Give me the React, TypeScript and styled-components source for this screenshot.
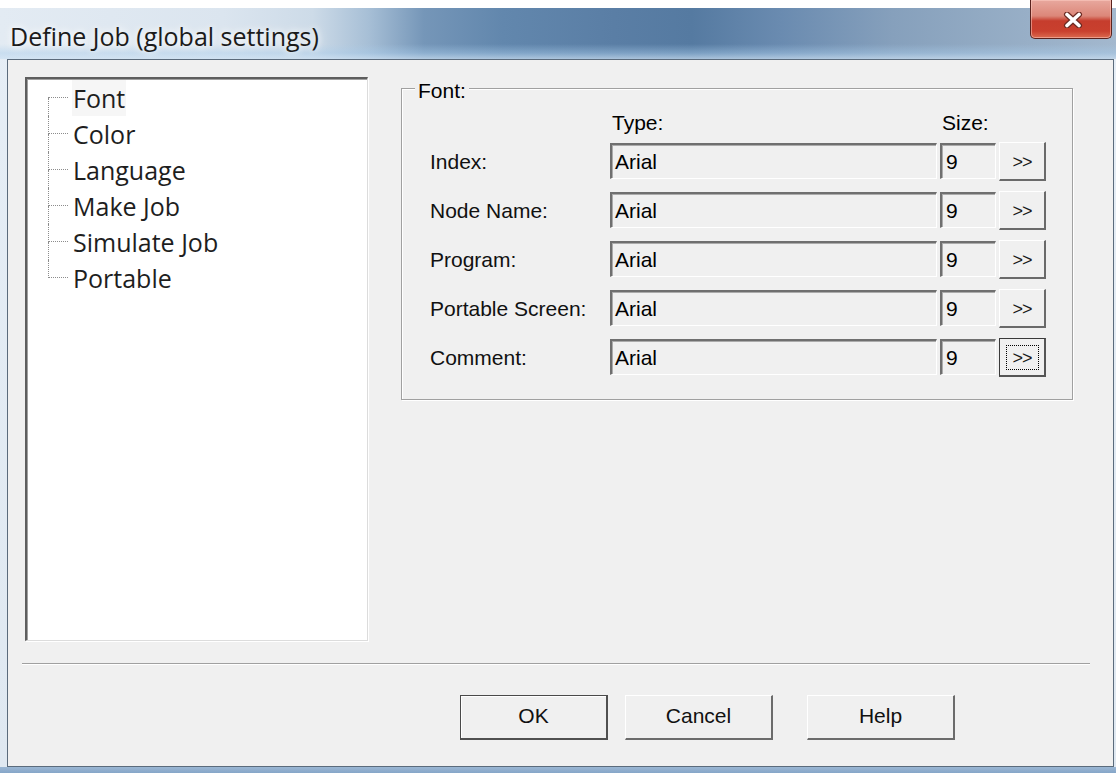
import { Fragment } from 'react';
import styled, { createGlobalStyle } from 'styled-components';

const GlobalStyle = createGlobalStyle`
  html, body {
    margin: 0;
    padding: 0;
    background: #ffffff;
  }
  body {
    width: 1116px;
    height: 773px;
    overflow: hidden;
  }
`;

const Window = styled.div`
  width: 1116px;
  height: 773px;
  display: flex;
  flex-direction: column;
  background: linear-gradient(
    to bottom,
    #e6eef6 0,
    #dfe8f1 calc(100% - 6px),
    #9ab6d3 calc(100% - 6px),
    #86a6c8 100%
  );
`;

const TitleBar = styled.div`
  height: 59px;
  flex: none;
  display: flex;
  align-items: flex-start;
  justify-content: space-between;
  background:
    linear-gradient(
      to bottom,
      #ffffff 0,
      #ffffff 8px,
      rgba(255, 255, 255, 0) 8px,
      rgba(255, 255, 255, 0) 44px,
      rgba(170, 205, 235, 0.45) 53px,
      rgba(205, 225, 243, 0.7) 59px
    ),
    linear-gradient(
      to right,
      #e3ebf3 0%,
      #dbe5ef 20%,
      #cddbe8 28%,
      #a7bfd6 33%,
      #7596b8 38%,
      #6287ad 45%,
      #5a7ea5 55%,
      #557aa1 62%,
      #6a8bb0 70%,
      #86a0bc 80%,
      #92aac3 88%,
      #a3b8ce 100%
    );
`;

const Title = styled.span`
  margin: 19px 0 0 10px;
  font-family: 'Open Sans', 'Noto Sans', sans-serif;
  font-size: 25px;
  line-height: 34px;
  color: #1b1b1b;
  text-shadow: 0 0 6px rgba(255, 255, 255, 0.95), 0 0 12px rgba(255, 255, 255, 0.8);
`;

const CloseButton = styled.div`
  width: 82px;
  height: 39px;
  margin-right: 4px;
  box-sizing: border-box;
  display: flex;
  align-items: center;
  justify-content: center;
  padding: 2px 0 0 4px;
  border: 1px solid #5a221d;
  border-top: none;
  border-radius: 0 0 5px 5px;
  background: linear-gradient(
    to bottom,
    #e8a89e 0%,
    #dc8779 42%,
    #c63d2d 55%,
    #c9402e 82%,
    #db6a4f 100%
  );
  box-shadow: inset 0 0 0 1px rgba(255, 210, 200, 0.5);
`;

const Client = styled.div`
  flex: 1;
  margin: 0 2px 6px 7px;
  border: 1px solid #5b6b7c;
  background: #f0f0f0;
  display: flex;
  flex-direction: column;
  font-family: 'Liberation Sans', Arial, sans-serif;
  font-size: 21px;
  color: #000;
`;

const Body = styled.div`
  display: flex;
  align-items: flex-start;
  gap: 33px;
  padding: 17px 0 0 17px;
`;

const Tree = styled.div`
  width: 343px;
  height: 564px;
  box-sizing: border-box;
  padding-top: 1px;
  background: #ffffff;
  border-style: solid;
  border-width: 2px 1px 1px 2px;
  border-color: #5e5e5e #dcdcdc #dcdcdc #5e5e5e;
  box-shadow: inset 1px 1px 0 #a0a0a0, 1px 1px 0 #ffffff;
`;

const TreeRow = styled.div`
  display: flex;
  height: 36px;
`;

const Branch = styled.div<{ $first?: boolean; $last?: boolean }>`
  width: 20px;
  margin-left: 21px;
  display: flex;
  flex-direction: column;

  &::before {
    content: '';
    height: 18px;
    box-sizing: border-box;
    border-left: ${(p) => (p.$first ? 'none' : '1px dotted #8c8c8c')};
    border-bottom: 1px dotted #8c8c8c;
  }

  &::after {
    content: '';
    height: 18px;
    border-left: ${(p) => (p.$last ? 'none' : '1px dotted #8c8c8c')};
  }
`;

const TreeLabel = styled.span<{ $current?: boolean }>`
  margin-left: 4px;
  padding: 0 1px;
  font-family: 'Open Sans', 'Noto Sans', sans-serif;
  font-size: 25px;
  line-height: 36px;
  color: #1e1e1e;
  background: ${(p) => (p.$current ? 'rgba(0, 0, 0, 0.035)' : 'transparent')};
`;

const GroupBox = styled.div`
  margin-top: 11px;
  width: 672px;
  box-sizing: border-box;
  border: 1px solid #a0a0a0;
  box-shadow: inset 1px 1px 0 #ffffff, 1px 1px 0 #ffffff;
  padding: 22px 26px 24px 28px;
`;

const Legend = styled.div`
  width: fit-content;
  margin: -32px 0 8px -15px;
  padding: 0 3px;
  line-height: 24px;
  background: #f0f0f0;
`;

const FontGrid = styled.div`
  display: grid;
  grid-template-columns: 177px 327px 56px 47px;
  grid-template-rows: 19px repeat(5, 36px);
  column-gap: 3px;
  row-gap: 13px;
`;

const ColumnHead = styled.div`
  line-height: 24px;
  padding-left: 2px;
`;

const RowLabel = styled.div`
  line-height: 37px;
  color: #111;
`;

const Field = styled.div<{ $pad: number }>`
  height: 36px;
  box-sizing: border-box;
  padding-left: ${(p) => p.$pad}px;
  line-height: 34px;
  background: #f0f0f0;
  border-style: solid;
  border-width: 2px 1px 1px 2px;
  border-color: #6f6f6f #ffffff #ffffff #6f6f6f;
  box-shadow: inset 1px 1px 0 #ababab;
  white-space: nowrap;
  overflow: hidden;
`;

const PickButton = styled.button<{ $focused?: boolean }>`
  align-self: start;
  height: 39px;
  margin-top: -1px;
  padding: 2px 0 0;
  box-sizing: border-box;
  background: #f0f0f0;
  font-family: 'Liberation Sans', Arial, sans-serif;
  font-size: 18px;
  letter-spacing: -1px;
  color: #1a1a1a;
  border-style: solid;
  border-width: 1px 2px 2px 1px;
  border-color: ${(p) =>
    p.$focused ? '#3a3a3a #555555 #555555 #3a3a3a' : '#ffffff #6a6a6a #6a6a6a #ffffff'};
  outline: ${(p) => (p.$focused ? '1px dotted #000' : 'none')};
  outline-offset: -8px;
`;

const Separator = styled.div`
  margin: 22px 0 0 14px;
  width: 1068px;
  border-top: 1px solid #a0a0a0;
  border-bottom: 1px solid #ffffff;
`;

const ButtonRow = styled.div`
  display: flex;
  gap: 17px;
  margin-top: 30px;
  padding-left: 452px;
`;

const DialogButton = styled.button<{ $default?: boolean; $spaced?: boolean }>`
  width: 148px;
  height: 45px;
  margin-left: ${(p) => (p.$spaced ? '17px' : '0')};
  padding: 0 0 2px;
  box-sizing: border-box;
  background: #f0f0f0;
  font-family: 'Liberation Sans', Arial, sans-serif;
  font-size: 21px;
  color: #111;
  border-style: solid;
  border-width: 1px 2px 2px 1px;
  border-color: ${(p) =>
    p.$default ? '#4a4a4a #505050 #505050 #4a4a4a' : '#ffffff #6b6b6b #6b6b6b #ffffff'};
  box-shadow: ${(p) => (p.$default ? 'inset 1px 1px 0 #ffffff' : 'none')};
`;

const treeItems = ['Font', 'Color', 'Language', 'Make Job', 'Simulate Job', 'Portable'];

const fontRows = ['Index:', 'Node Name:', 'Program:', 'Portable Screen:', 'Comment:'];

function CloseGlyph() {
  return (
    <svg width="22" height="16" viewBox="0 0 22 16">
      <path d="M5 2.5 L17 13.5 M17 2.5 L5 13.5" stroke="#6b2a22" strokeWidth="6" strokeLinecap="round" />
      <path d="M5 2.5 L17 13.5 M17 2.5 L5 13.5" stroke="#ffffff" strokeWidth="3.6" strokeLinecap="round" />
    </svg>
  );
}

export default function App() {
  return (
    <>
      <GlobalStyle />
      <Window>
        <TitleBar>
          <Title>Define Job (global settings)</Title>
          <CloseButton>
            <CloseGlyph />
          </CloseButton>
        </TitleBar>
        <Client>
          <Body>
            <Tree>
              {treeItems.map((item, i) => (
                <TreeRow key={item}>
                  <Branch $first={i === 0} $last={i === treeItems.length - 1} />
                  <TreeLabel $current={i === 0}>{item}</TreeLabel>
                </TreeRow>
              ))}
            </Tree>
            <GroupBox>
              <Legend>Font:</Legend>
              <FontGrid>
                <span />
                <ColumnHead>Type:</ColumnHead>
                <ColumnHead>Size:</ColumnHead>
                <span />
                {fontRows.map((label, i) => (
                  <Fragment key={label}>
                    <RowLabel>{label}</RowLabel>
                    <Field $pad={3}>Arial</Field>
                    <Field $pad={4}>9</Field>
                    <PickButton $focused={i === fontRows.length - 1}>&gt;&gt;</PickButton>
                  </Fragment>
                ))}
              </FontGrid>
            </GroupBox>
          </Body>
          <Separator />
          <ButtonRow>
            <DialogButton $default>OK</DialogButton>
            <DialogButton>Cancel</DialogButton>
            <DialogButton $spaced>Help</DialogButton>
          </ButtonRow>
        </Client>
      </Window>
    </>
  );
}
